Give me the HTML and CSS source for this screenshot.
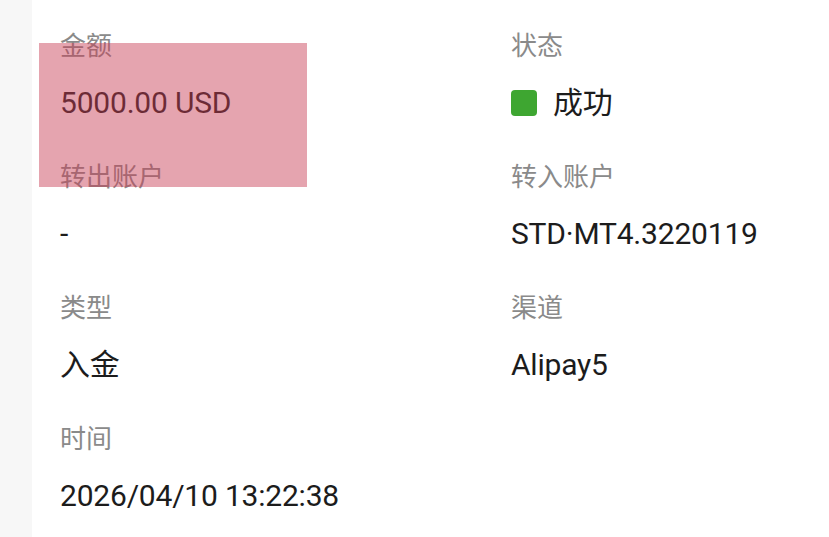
FILE: index.html
```html
<!DOCTYPE html>
<html lang="zh-CN">
<head>
<meta charset="utf-8">
<title>交易详情</title>
<link rel="stylesheet" href="styles.css">
</head>
<body>
<div class="page">
  <div class="card">
    <div class="grid">
      <div class="item">
        <div class="label">金额</div>
        <div class="value">5000.00 USD</div>
      </div>
      <div class="item">
        <div class="label">状态</div>
        <div class="value status"><span class="dot"></span><span>成功</span></div>
      </div>
      <div class="item">
        <div class="label">转出账户</div>
        <div class="value">-</div>
      </div>
      <div class="item">
        <div class="label">转入账户</div>
        <div class="value">STD·MT4.3220119</div>
      </div>
      <div class="item">
        <div class="label">类型</div>
        <div class="value">入金</div>
      </div>
      <div class="item">
        <div class="label">渠道</div>
        <div class="value">Alipay5</div>
      </div>
      <div class="item">
        <div class="label">时间</div>
        <div class="value">2026/04/10 13:22:38</div>
      </div>
    </div>
  </div>
  <div class="mask"></div>
</div>
</body>
</html>
```
FILE: styles.css
```css
html, body {
  margin: 0;
  padding: 0;
  background: #f7f7f7;
  height: 100%;
}
.page {
  position: relative;
  height: 100%;
  padding-left: 32px;
  box-sizing: border-box;
}
.card {
  background: #ffffff;
  height: 100%;
  box-sizing: border-box;
  padding: 31px 0 0 28px;
}
.grid {
  display: grid;
  grid-template-columns: 451px 1fr;
  row-gap: 39px;
}
.item {
  display: flex;
  flex-direction: column;
  gap: 26px;
}
.label {
  font-family: "Noto Sans CJK SC", sans-serif;
  font-size: 26px;
  line-height: 26px;
  color: #8a8a8a;
}
.value {
  font-family: "Roboto", "Noto Sans CJK SC", sans-serif;
  font-size: 30px;
  line-height: 40px;
  color: #1c1c1c;
  letter-spacing: -0.2px;
}
.status {
  display: flex;
  align-items: center;
}
.dot {
  width: 26px;
  height: 26px;
  border-radius: 4px;
  background: #3ea631;
  margin-right: 16px;
}
.mask {
  position: absolute;
  left: 39px;
  top: 43px;
  width: 268px;
  height: 144px;
  background: rgba(200, 62, 84, 0.47);
}
```
